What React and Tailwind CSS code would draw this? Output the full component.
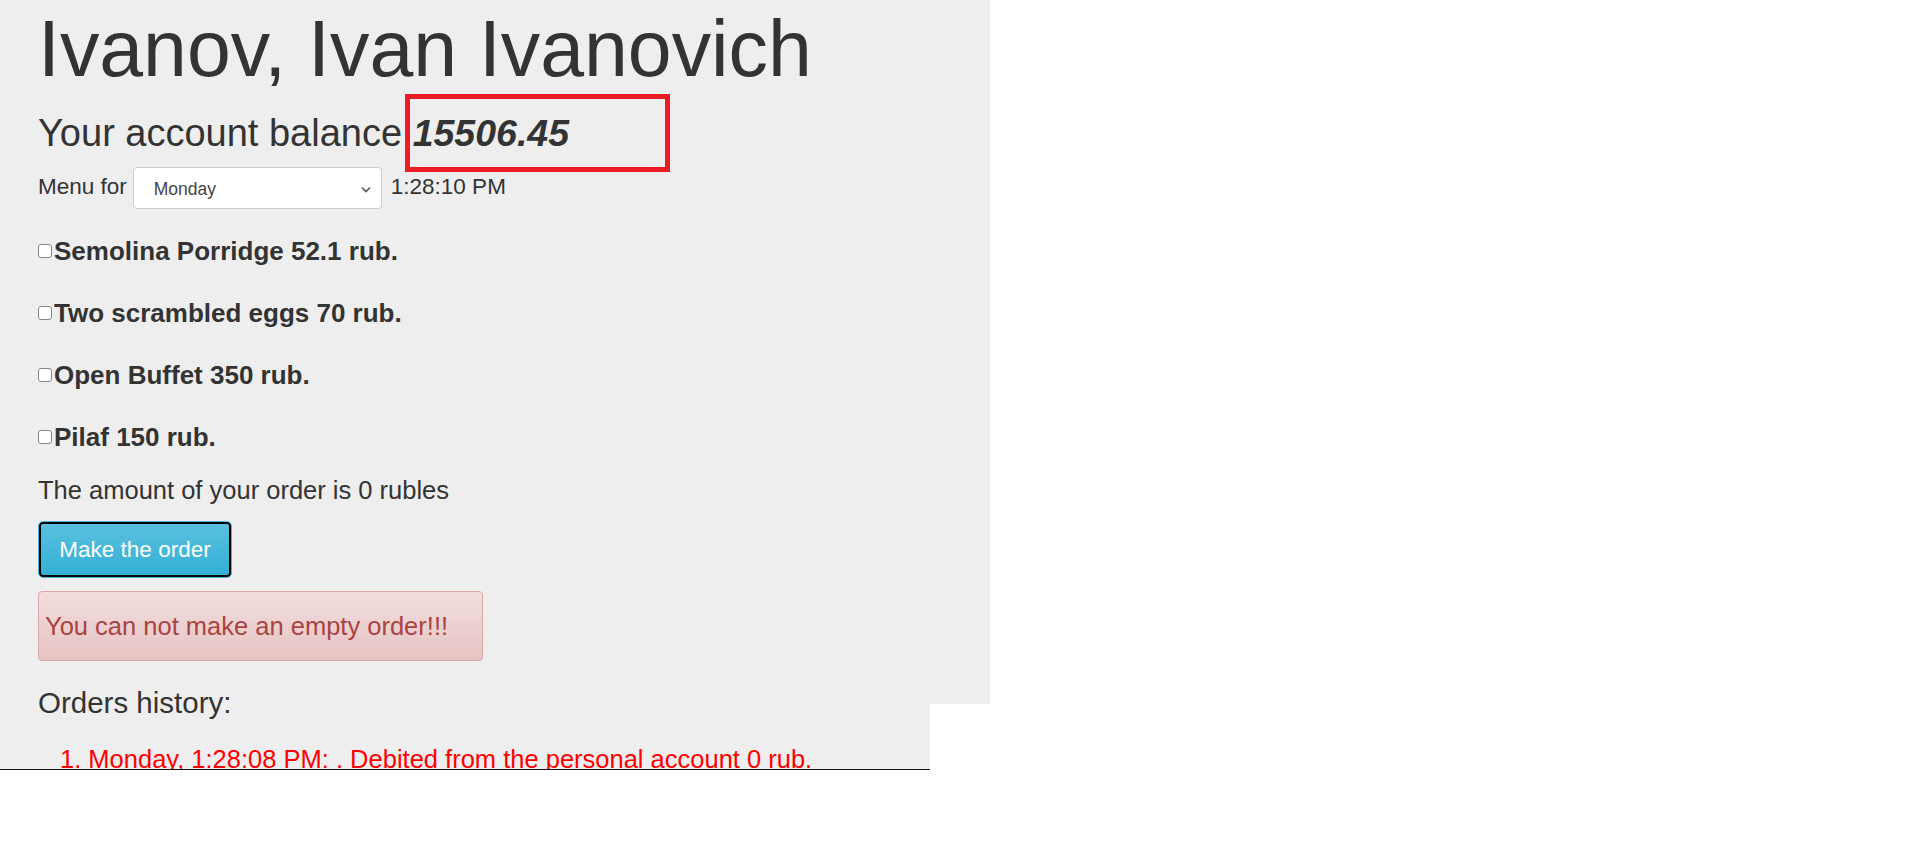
export default function App() {
  const items = [
    "Semolina Porridge 52.1 rub.",
    "Two scrambled eggs 70 rub.",
    "Open Buffet 350 rub.",
    "Pilaf 150 rub.",
  ];
  return (
    <div className="min-h-[858px] w-full bg-white font-['Liberation_Sans',Arial,sans-serif] text-[#333]">
      <div className="relative h-[770px] w-[990px] overflow-hidden bg-[#eee] pl-[38px]">
        <h1 className="pt-[10px] text-[78.8px] font-normal leading-[78px]">Ivanov, Ivan Ivanovich</h1>
        <div className="mt-[26px] text-[38px] leading-[38px]">
          Your account balance <b className="text-[37.5px] font-bold italic">15506.45</b>
        </div>
        <div className="mt-[15px] flex h-[42px] items-center text-[22.5px] leading-[23px]">
          <span className="mb-[3px]">Menu for</span>
          <div className="ml-[6px] flex h-[42px] w-[249px] items-center justify-between rounded-[4px] border border-[#ccc] bg-white pl-[20px] pr-[10px] pt-[2px] text-[17.5px] text-[#444]">
            <span>Monday</span>
            <svg width="10" height="7" viewBox="0 0 10 7" fill="none">
              <path d="M1 1.5 L5 5.5 L9 1.5" stroke="#555" strokeWidth="1.6" />
            </svg>
          </div>
          <span className="mb-[3px] ml-[9px]">1:28:10 PM</span>
        </div>
        <div className="mt-[29px] flex flex-col gap-[36px]">
          {items.map((t) => (
            <label key={t} className="flex h-[26px] items-center">
              <span className="h-[14px] w-[14px] rounded-[3px] border border-[#858585] bg-white" />
              <span className="ml-[2px] text-[26px] font-bold leading-[26px]">{t}</span>
            </label>
          ))}
        </div>
        <div className="mt-[28px] text-[25.5px] leading-[25px]">The amount of your order is 0 rubles</div>
        <button className="mt-[18px] flex h-[57px] w-[194px] items-center justify-center rounded-[5px] border border-[#46b8da] bg-[linear-gradient(#5bc0de,#31b0d5)] text-[22.5px] leading-[23px] text-white shadow-[inset_0_0_0_2px_#000]">
          Make the order
        </button>
        <div className="mt-[13px] flex h-[70px] w-[445px] items-center rounded-[4px] border border-[#dca7a7] bg-[linear-gradient(#f2dede,#e7c3c3)] pl-[6px] text-[25.5px] leading-[25px] text-[#a94442]">
          You can not make an empty order!!!
        </div>
        <h3 className="mt-[27px] text-[29.5px] font-normal leading-[30px]">Orders history:</h3>
        <ol className="mt-[29px] list-inside list-decimal pl-[22px] text-[25.5px] leading-[25px] text-[#f00]">
          <li>Monday, 1:28:08 PM: . Debited from the personal account 0 rub.</li>
        </ol>
        <div className="absolute left-[405px] top-[94px] h-[78px] w-[265px] border-[5px] border-[#ed1c24]" />
        <div className="absolute bottom-0 right-0 h-[66px] w-[60px] bg-white" />
        <div className="absolute bottom-0 left-0 h-px w-[930px] bg-[#111]" />
      </div>
    </div>
  );
}
